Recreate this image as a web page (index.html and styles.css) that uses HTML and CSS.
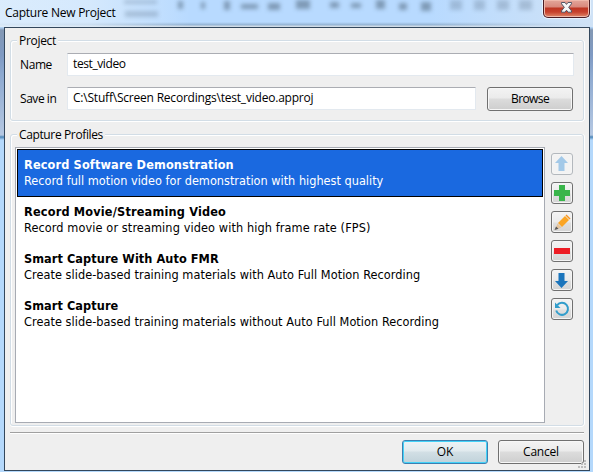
FILE: index.html
```html
<!DOCTYPE html>
<html lang="en">
<head>
<meta charset="utf-8">
<title>Capture New Project</title>
<link rel="stylesheet" href="styles.css">
</head>
<body>
<div class="window">
  <header class="titlebar">
    <svg class="glass" width="593" height="27" aria-hidden="true">
      <defs><filter id="soft" x="-10%" y="-50%" width="120%" height="200%"><feGaussianBlur stdDeviation="2.2"/></filter></defs>
      <g filter="url(#soft)" fill="#465b70" opacity=".5">
        <rect x="178" y="1" width="5" height="8"/><rect x="201" y="2" width="4" height="7"/><rect x="224" y="1" width="6" height="9"/><rect x="241" y="4" width="17" height="5"/><rect x="268" y="3" width="12" height="7"/><rect x="296" y="0" width="14" height="9"/><rect x="330" y="2" width="9" height="6"/><rect x="351" y="3" width="10" height="5"/><rect x="376" y="0" width="9" height="9"/><rect x="399" y="3" width="8" height="7"/><rect x="421" y="2" width="10" height="9"/>
      </g>
      <g filter="url(#soft)" fill="#60768e" opacity=".32">
        <rect x="124" y="0" width="33" height="4"/><rect x="125" y="11" width="33" height="6"/><rect x="450" y="0" width="12" height="10"/><rect x="474" y="0" width="11" height="10"/><rect x="497" y="0" width="12" height="10"/><rect x="519" y="0" width="13" height="10"/>
      </g>
    </svg>
    <h1 class="title">Capture New Project</h1>
    <button class="close" aria-label="Close">
      <svg width="13" height="11" viewBox="0 0 13 11"><path d="M1.500 .5H5L6.500 2.400 8 .5h3.500v1.300L8.700 5.300l2.800 3.600v1.300H8L6.500 8.200 5 10.200H1.500V8.900L4.300 5.300 1.500 1.800z" fill="#f6f6f6" stroke="#535666"/></svg>
    </button>
  </header>
  <main class="client">
    <section class="group project">
      <h2 class="legend"><span class="t-project">Project</span></h2>
      <div class="field"><label class="t-name" for="name">Name</label><div class="input wide" id="name"><span class="t-video">test_video</span></div></div>
      <div class="field"><label class="t-save" for="path">Save in</label><div class="input path" id="path"><span class="t-path">C:\Stuff\Screen Recordings\test_video.approj</span></div><button class="btn browse">Browse</button></div>
    </section>
    <section class="group profiles">
      <h2 class="legend"><span class="t-profiles">Capture Profiles</span></h2>
      <div class="body">
        <ul class="list">
          <li class="selected"><b class="b1">Record Software Demonstration</b><span class="d1">Record full motion video for demonstration with highest quality</span></li>
          <li><b class="b2">Record Movie/Streaming Video</b><span class="d2">Record movie or streaming video with high frame rate (FPS)</span></li>
          <li><b class="b3">Smart Capture With Auto FMR</b><span class="d3">Create slide-based training materials with Auto Full Motion Recording</span></li>
          <li><b class="b4">Smart Capture</b><span class="d4">Create slide-based training materials without Auto Full Motion Recording</span></li>
        </ul>
        <div class="tools">
          <button class="tool disabled" aria-label="Move up"><svg width="22" height="22"><path d="M10.500 3L17 10h-3.500v8h-6v-8H4z" fill="#a3c9e8"/></svg></button>
          <button class="tool" aria-label="Add"><svg width="22" height="22"><path d="M8 3h6v5h5v6h-5v5H8v-5H3V8h5z" fill="#39b54a"/></svg></button>
          <button class="tool" aria-label="Edit"><svg width="22" height="22"><path d="M7 12l7-7 4 4-7 7z" fill="#fba524"/><path d="M14.500 4.500l1-1 4 4-1 1z" fill="#f7941e"/><path d="M6.500 12.500l4 4L4 19z" fill="#e5c49c"/><path d="M5 15.500l2.500 2.300L3.500 19z" fill="#565656"/></svg></button>
          <button class="tool" aria-label="Remove"><svg width="22" height="22"><path d="M3 8h16v6H3z" fill="#ed1c24"/></svg></button>
          <button class="tool" aria-label="Move down"><svg width="22" height="22"><path d="M7.500 4h6v8H17l-6.500 7L4 12h3.500z" fill="#1b75bc"/></svg></button>
          <button class="tool" aria-label="Reset"><svg width="22" height="22"><path d="M6.200 7.200A6 6 0 1 1 5.200 12.500" fill="none" stroke="#329dcb" stroke-width="2"/><path d="M4 4.500V10h5.500z" fill="#329dcb"/></svg></button>
        </div>
      </div>
    </section>
    <hr>
    <footer class="actions"><button class="btn ok">OK</button><button class="btn cancel">Cancel</button></footer>
    <svg class="grip" width="8" height="8" aria-hidden="true"><path d="M6 0h2v2H6zM3 3h2v2H3zM6 3h2v2H6zM0 6h2v2H0zM3 6h2v2H3zM6 6h2v2H6z" fill="#bdbdbd"/></svg>
  </main>
</div>
</body>
</html>
```
FILE: styles.css
```css
* { box-sizing: border-box; }
body { margin: 0; overflow: hidden; font: 12px/16px "Open Sans", "Noto Sans", sans-serif; color: #000; }
h1, h2 { margin: 0; font-size: 12px; font-weight: 400; }
button { font: inherit; color: #000; padding: 0; margin: 0; }
.window { width: 593px; height: 472px; background: linear-gradient(#b9dcff 0, #b9dcff 27px, #8398b4 30px, #7f9ac3 55px, #8eaad0 75px, #b5c8e2 135px, #4d86b8 137px, #b4d8fb 140px, #b4d8fb 100%); }
.titlebar { position: relative; height: 27px; display: flex; justify-content: space-between; align-items: flex-start; padding: 0 3px 0 5px; background: linear-gradient(90deg, rgba(225,239,252,.85) 0, rgba(225,239,252,.7) 90px, rgba(200,224,250,0) 190px, rgba(200,224,250,0) 430px, #cfe2f6 590px), linear-gradient(#b8daff 0, #b8daff 22px, #93b2d1 25px, #d0dce7 26px); }
.glass { position: absolute; left: 0; top: 0; }
.title { position: relative; padding-top: 5px; letter-spacing: -.25px; }
.close { position: relative; width: 47px; height: 18px; display: flex; justify-content: center; padding-top: 2px; border: 1px solid #4a1d25; border-top: 0; border-radius: 0 0 5px 5px; background: linear-gradient(#e3a79b 0, #d9887c 7px, #bd3623 8px, #c7412d 12px, #df8a6c 17px); box-shadow: inset 0 0 0 1px #efb9ac, 0 0 0 1px #e8f3fe; }
.client { position: relative; width: 586px; height: 444px; margin-left: 4px; padding: 6px 5px 0; border: 1px solid #33475c; background: #efefef; }
.group { border: 1px solid #d2dde6; border-radius: 3px; box-shadow: inset 1px 1px #fff, 0 1px #fff, 1px 0 #fff; }
.legend { width: max-content; height: 14px; line-height: 14px; margin: -7px 0 0 6px; padding: 0 2px; background: #efefef; white-space: nowrap; }
.t-project { letter-spacing: -.3px; }
.t-profiles { letter-spacing: -.37px; }
.t-name { letter-spacing: -.4px; }
.t-save { letter-spacing: -.45px; }
.t-video { letter-spacing: -.4px; }
.t-path { letter-spacing: -.21px; }
.project { height: 81px; margin-top: 6px; }
.field { display: flex; align-items: center; height: 23px; margin: 5px 0 0 9px; }
.field + .field { height: 24px; margin-top: 11px; }
.field label { width: 47px; white-space: nowrap; }
.input { height: 23px; line-height: 20px; padding-left: 5px; border: 1px solid #e3e9ef; border-top-color: #abadb3; background: #fff; white-space: nowrap; }
.field + .field .input { align-self: flex-start; }
.wide { width: 507px; }
.path { width: 409px; }
.btn { width: 86px; height: 24px; line-height: 20px; letter-spacing: -.2px; border: 1px solid #707070; border-radius: 3px; background: linear-gradient(#f3f3f3 0, #ebebeb 10px, #dcdcdc 11px, #cecece 22px); box-shadow: inset 0 0 0 1px #f7f7f7; }
.browse { margin-left: 11px; letter-spacing: -.6px; }
.profiles { height: 292px; margin-top: 13px; }
.body { display: flex; margin: 5px 0 0 4px; }
.list { width: 530px; height: 276px; margin: 0; padding: 1px; border: 1px solid #a7abb3; background: #fff; list-style: none; font: 12.6px/16px "DejaVu Sans Condensed", "DejaVu Sans", sans-serif; }
.list li { height: 47px; padding: 8px 7px 0; }
.list .selected { height: 48px; margin-bottom: -1px; padding: 7px 6px 0; border: 1px solid #000; background: #1a69e0; color: #fff; }
.list b, .list span { display: block; width: max-content; white-space: nowrap; }
.b1 { letter-spacing: .15px; }
.b2 { letter-spacing: .18px; }
.b3, .b4 { letter-spacing: .07px; }
.d2 { letter-spacing: .1px; }
.d3, .d4 { letter-spacing: .05px; }
.tools { display: flex; flex-direction: column; gap: 7px; margin: 6px 0 0 6px; }
.tool { width: 22px; height: 22px; border: 1px solid #707070; border-radius: 3px; background: linear-gradient(#f3f3f3 0, #ebebeb 10px, #dfdfdf 11px, #d3d3d3 21px); box-shadow: inset 0 0 0 1px #f5f5f5; }
.tool svg { display: block; margin: -1px; }
.disabled { border-color: #b3b8bd; background: #f3f3f3; }
hr { height: 2px; margin: 6px 0 0; border: 0; border-top: 1px solid #a0a0a0; background: #fff; }
.actions { display: flex; justify-content: flex-end; gap: 10px; margin: 6px 0 0; }
.ok { border-color: #3c7fb1; background: linear-gradient(#edf3f6 0, #e1eaee 10px, #d2dfe5 11px, #c0d2da 22px); box-shadow: inset 0 0 0 1px #43d2f8; }
.grip { position: absolute; right: 3px; bottom: 2px; }
```
